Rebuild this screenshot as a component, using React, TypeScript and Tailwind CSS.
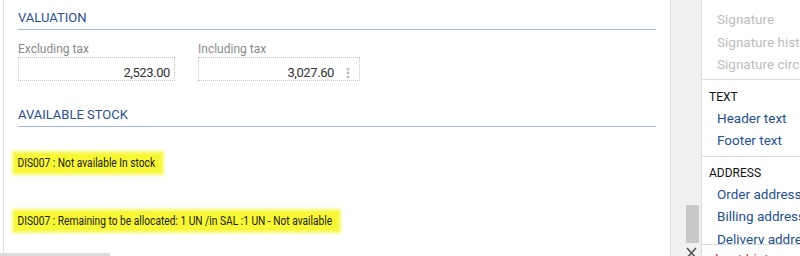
import { MoreVertical } from "lucide-react";

const signatureItems = ["Signature", "Signature history", "Signature circuit"];
const textItems = ["Header text", "Footer text"];
const addressItems = ["Order address", "Billing address", "Delivery address"];

function SectionTitle({ label, className = "" }: { label: string; className?: string }) {
  return (
    <h2
      className={`border-b border-[#a9bde3] pb-[3px] text-[13px] leading-[16px] text-[#2c4f8f] ${className}`}
    >
      {label}
    </h2>
  );
}

function AmountField({ label, value, width, menu }: { label: string; value: string; width: string; menu?: boolean }) {
  return (
    <div className={width}>
      <div className="h-[16px] text-[12px] leading-[16px] text-[#8a8a8a]">{label}</div>
      <div className="flex h-[24px] items-start justify-end border border-dotted border-[#c4c4c4] pr-[4px] pt-[7px]">
        <span className="text-[13px] leading-[16px] tracking-[-0.4px] text-[#333]">{value}</span>
        {menu && <MoreVertical size={14} className="ml-[7px] mt-[1px] text-[#bdbdbd]" strokeWidth={3} />}
      </div>
    </div>
  );
}

function Marked({ children }: { children: string }) {
  return (
    <span className="inline-block origin-left scale-x-[0.85] bg-[#f7f735] py-[1px] pl-[3px] pr-[7px] text-[12px] leading-[16px] text-[#222214] shadow-[0_0_3px_3px_#f8f85a]">
      {children}
    </span>
  );
}

export default function App() {
  return (
    <div className="flex h-[256px] w-[800px] overflow-hidden bg-white font-['Roboto',sans-serif]">
      {/* main form */}
      <div className="flex w-[670px] flex-col">
        <div className="ml-[3px] flex-1 border-l border-[#dedede] pl-[14px] pr-[14px] pt-[10px]">
          <SectionTitle label="VALUATION" />
          <div className="mt-[11px] flex gap-[23px]">
            <AmountField label="Excluding tax" value="2,523.00" width="w-[157px]" />
            <AmountField label="Including tax" value="3,027.60" width="w-[162px]" menu />
          </div>
          <SectionTitle label="AVAILABLE STOCK" className="mt-[26px]" />
          <div className="mt-[26px] -ml-[3px] leading-[18px]">
            <Marked>DIS007 : Not available In stock</Marked>
          </div>
          <div className="mt-[39px] -ml-[3px] leading-[18px]">
            <Marked>DIS007 : Remaining to be allocated: 1 UN /in SAL :1 UN - Not available</Marked>
          </div>
        </div>
        <div className="h-[3px] w-[110px] bg-[#dcdcdc]" />
      </div>

      {/* scroll strip */}
      <div className="flex w-[32px] flex-col border-x border-[#dcdcdc] bg-[#f1f1f1] pl-[15px]">
        <div className="flex-1" />
        <div className="h-[38px] w-[13px] bg-[#c9c9c9]" />
        <div className="h-[13px] pt-[4px]">
          <svg width="11" height="12" viewBox="0 0 11 12" className="text-[#555]">
            <path d="M1 1 L10 11 M10 1 L1 11" stroke="currentColor" strokeWidth="1.6" fill="none" />
          </svg>
        </div>
      </div>

      {/* side menu */}
      <div className="flex w-[98px] flex-col">
        <div className="flex-1 overflow-hidden whitespace-nowrap pt-[8px]">
          {signatureItems.map((s) => (
            <div key={s} className="pl-[15px] text-[13.5px] leading-[22.5px] text-[#bdbdbd]">
              {s}
            </div>
          ))}
          <div className="mt-[3px] border-t border-[#dcdcdc] pt-[7px]">
            <div className="pl-[7px] text-[12px] leading-[20px] text-[#111]">TEXT</div>
            {textItems.map((s) => (
              <div key={s} className="pl-[15px] text-[13.5px] leading-[22.5px] text-[#24508f]">
                {s}
              </div>
            ))}
          </div>
          <div className="mt-[4px] border-t border-[#dcdcdc] pt-[6px]">
            <div className="pl-[7px] text-[12px] leading-[20px] text-[#111]">ADDRESS</div>
            {addressItems.map((s) => (
              <div key={s} className="pl-[15px] text-[13.5px] leading-[22.5px] text-[#24508f]">
                {s}
              </div>
            ))}
          </div>
        </div>
        <div className="h-[12px] overflow-hidden whitespace-nowrap border-t border-[#dcdcdc] pl-[13px] pt-[7px] text-[14px] leading-[16px] text-[#d23a3a]">
          Lost history
        </div>
      </div>
    </div>
  );
}
